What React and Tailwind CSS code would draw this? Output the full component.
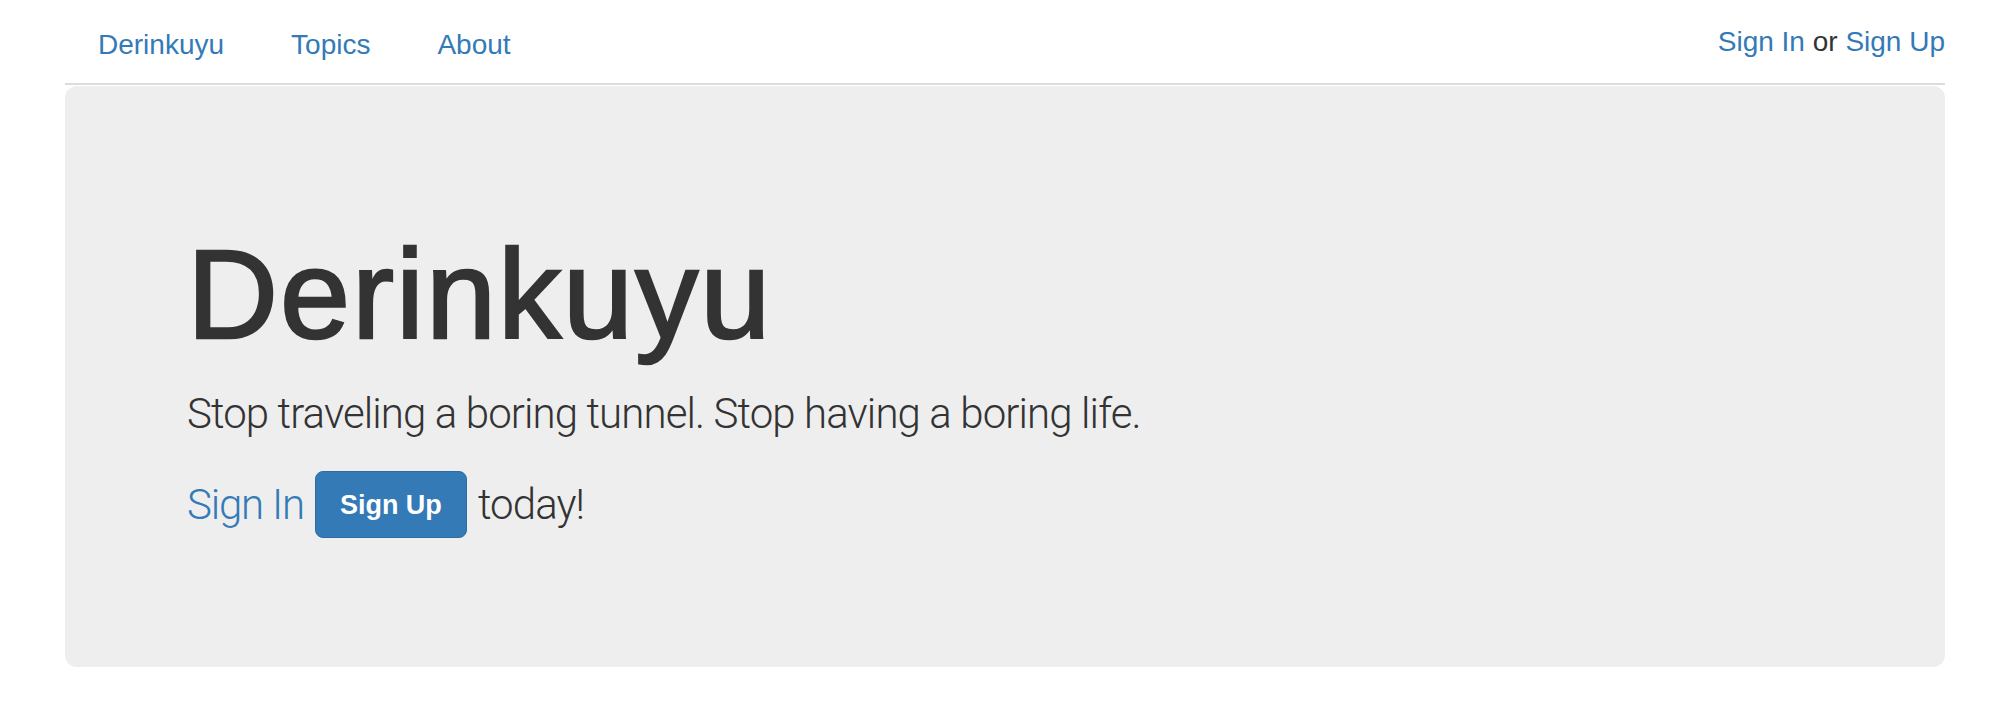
const navLinks = ["Derinkuyu", "Topics", "About"];

const sans = "font-['Liberation_Sans',Arial,sans-serif]";
const light = "font-['Roboto',sans-serif] font-light tracking-[-0.9px]";

export default function App() {
  return (
    <div className={`min-h-[720px] bg-white pl-[65px] pr-[55px] text-[#333] ${sans}`}>
      {/* Navbar */}
      <nav className="flex h-[85px] items-start justify-between border-b-2 border-[#dddddd]">
        <ul className="mt-[25px] ml-[33px] flex gap-[67px] text-[28px] leading-[40px]">
          {navLinks.map((l) => (
            <li key={l}>
              <a href="#" className="block text-[#337ab7]">
                {l}
              </a>
            </li>
          ))}
        </ul>
        <p className="mt-[22px] text-[28px] leading-[40px]">
          <a href="#" className="text-[#337ab7]">Sign In</a> or{" "}
          <a href="#" className="text-[#337ab7]">Sign Up</a>
        </p>
      </nav>

      {/* Jumbotron */}
      <div className="mt-px rounded-[12px] bg-[#eeeeee] px-[122px] pt-[140px] pb-[129px]">
        <h1 className="text-[126px] leading-[138px] font-normal tracking-[2px] text-[#333] [-webkit-text-stroke:2.5px_#333]">
          Derinkuyu
        </h1>
        <p className={`mt-[20px] text-[42px] leading-[60px] text-[#333] ${light}`}>
          Stop traveling a boring tunnel. Stop having a boring life.
        </p>
        <div className={`mt-[27px] flex h-[67px] items-center text-[42px] leading-[60px] ${light}`}>
          <a href="#" className="mr-[11px] tracking-[-1.2px] text-[#337ab7]">Sign In</a>
          <a
            href="#"
            className={`flex h-[67px] items-center rounded-[8px] border border-[#2e6da4] bg-[#337ab7] px-[24px] text-[27px] font-bold tracking-normal text-white ${sans}`}
          >
            Sign Up
          </a>
          <span className="ml-[11px] text-[#333]">today!</span>
        </div>
      </div>
    </div>
  );
}
